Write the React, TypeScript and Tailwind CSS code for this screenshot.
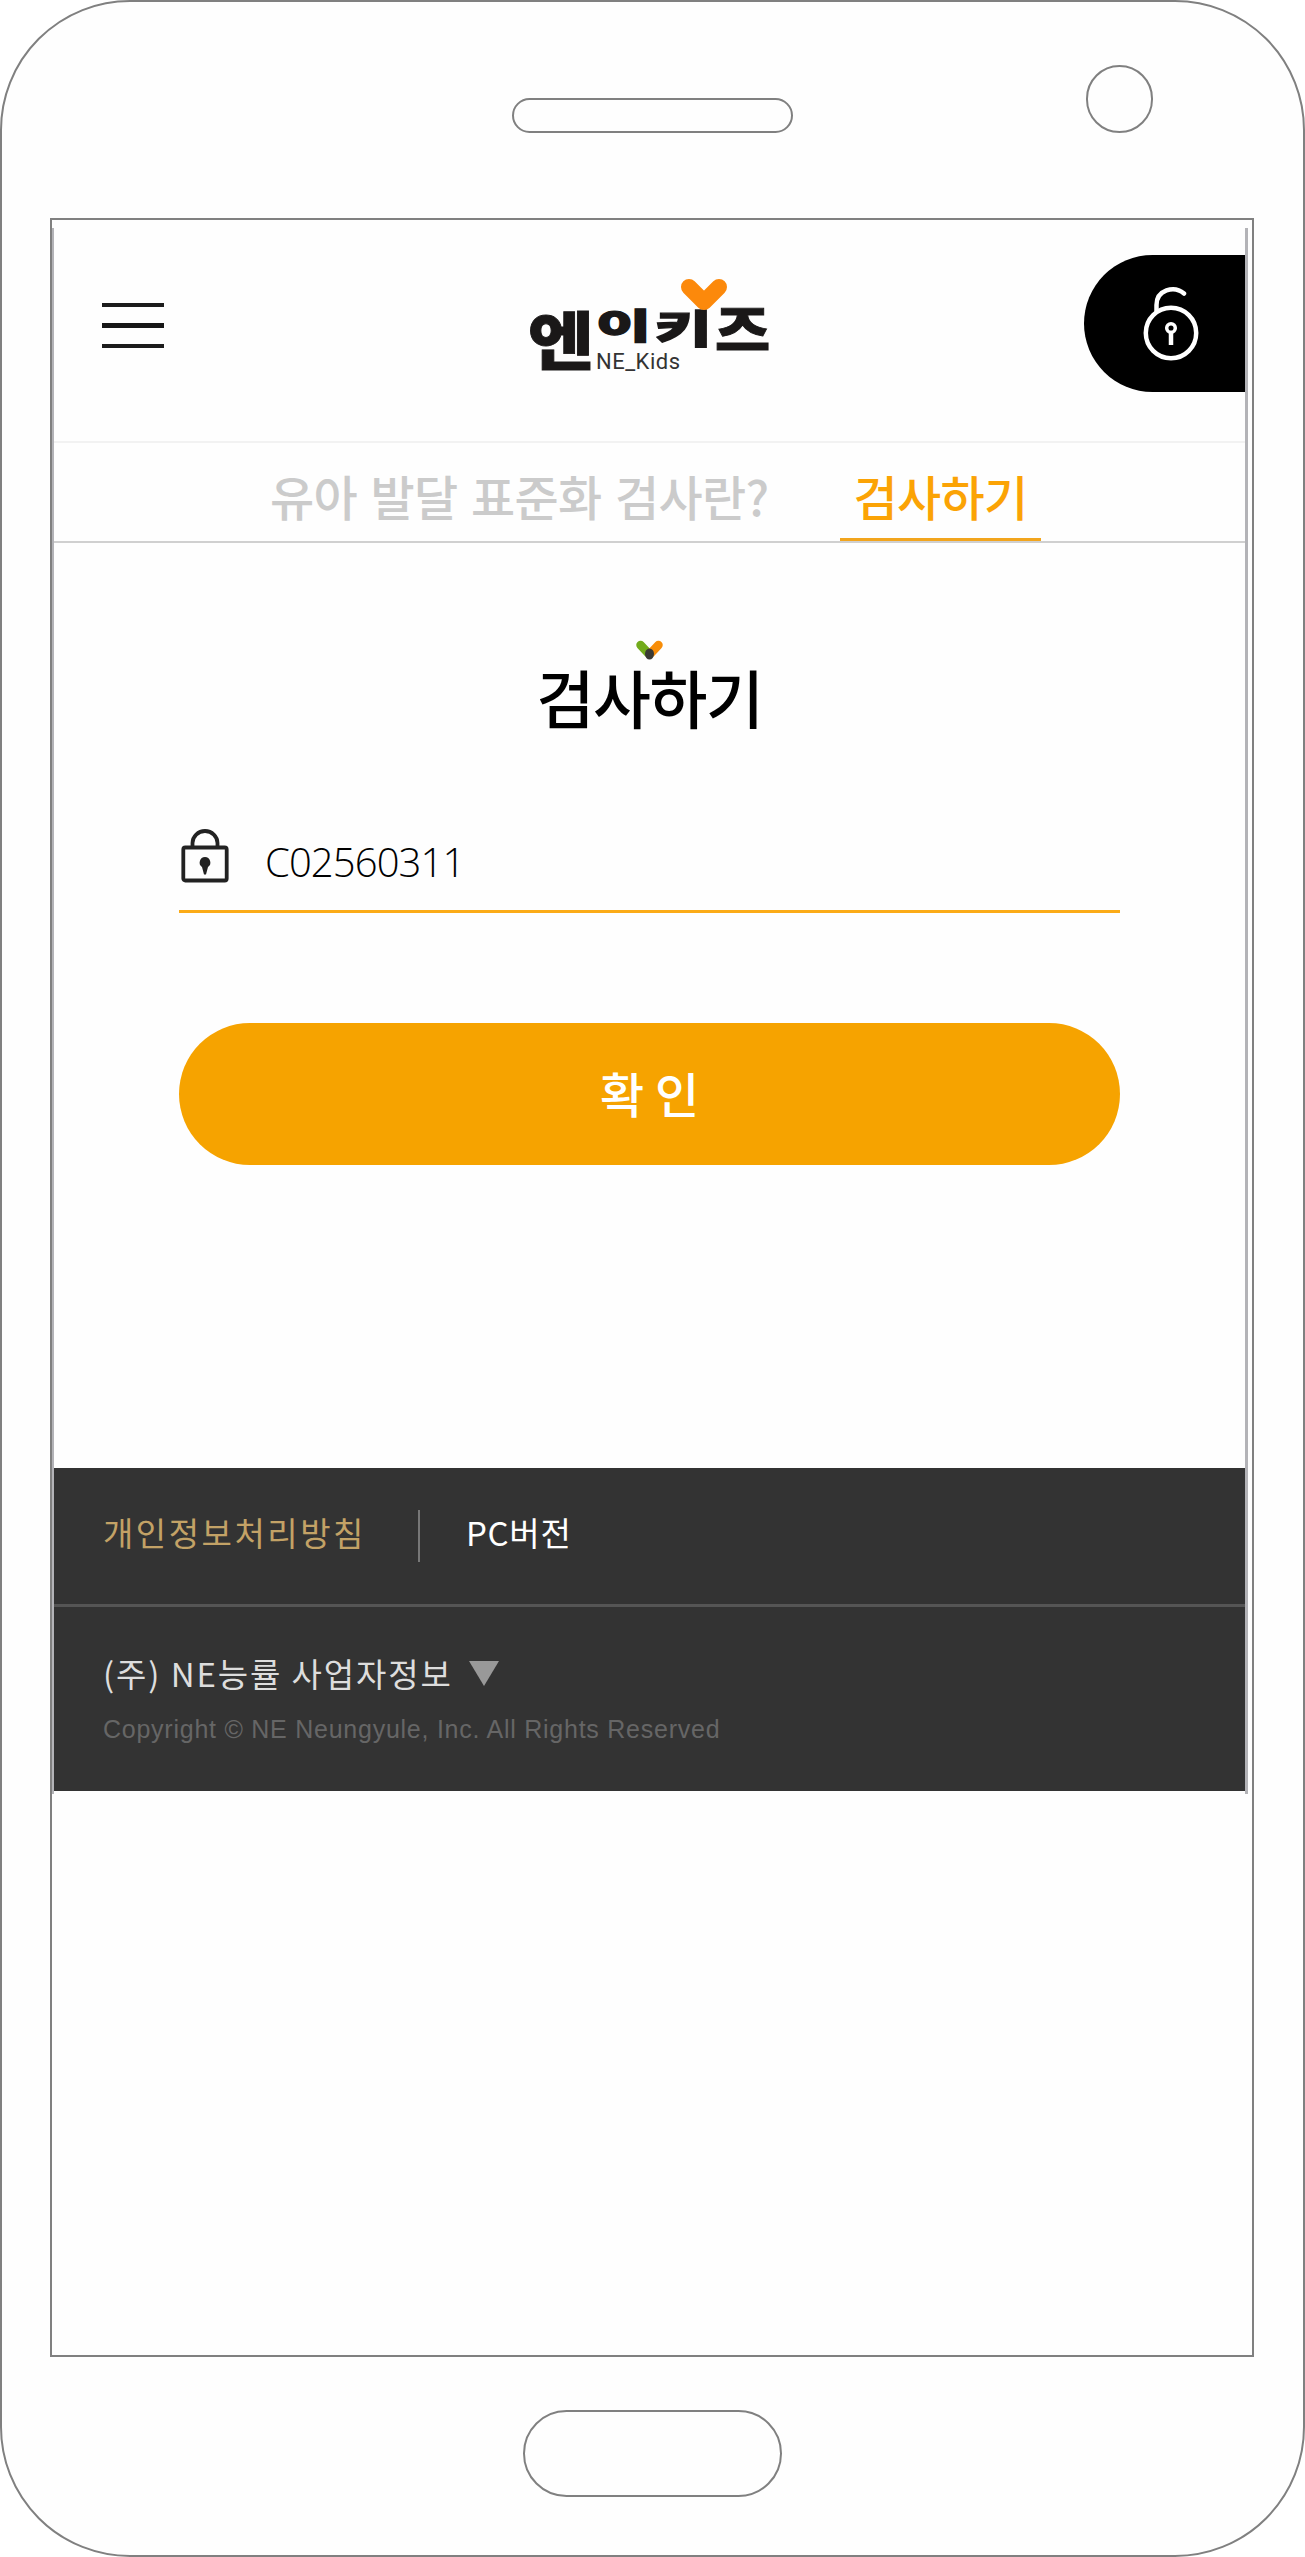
import React from "react";

const KR = "font-['Noto_Sans_CJK_KR',sans-serif]";

function Logo() {
  return (
    <svg className="block h-[100px] w-[250px] overflow-visible" viewBox="525 275 250 100" aria-label="엔이키즈 NE_Kids">
      <g fill="#1a1818" stroke="#1a1818" fontFamily="'Noto Sans CJK KR', sans-serif" fontWeight="900" fontSize="60">
        <text transform="translate(529 364) scale(1.2 1.05)" strokeWidth="0.8">엔</text>
        <text transform="translate(597 339) scale(1 0.58)" strokeWidth="2">이</text>
        <text transform="translate(656 343) scale(1.03 0.64)" strokeWidth="2">키</text>
        <text transform="translate(716 350.5) scale(1 0.9)" strokeWidth="1">즈</text>
      </g>
      <text x="597" y="369" fill="#333" fontFamily="Roboto, sans-serif" fontSize="22" textLength="84" lengthAdjust="spacing">
        NE_Kids
      </text>
      <path d="M690 287 L705 302 L720 287" fill="none" stroke="#fc890b" strokeWidth="16" strokeLinecap="round" strokeLinejoin="round" />
    </svg>
  );
}

function UnlockIcon() {
  return (
    <svg className="block h-[76px] w-[60px]" viewBox="0 0 60 76" fill="none" stroke="#fff" strokeWidth="4.5" strokeLinecap="round">
      <circle cx="30" cy="47" r="25.2" />
      <path d="M15.5 25 V19 C15.5 4 33 -1 43 7.500" />
      <circle cx="30" cy="42" r="4.300" strokeWidth="3.500" />
      <path d="M30 47 V59" strokeLinecap="butt" />
    </svg>
  );
}

function LockIcon() {
  return (
    <svg className="block h-[54px] w-[48px]" viewBox="0 0 48 54" fill="none" stroke="#222" strokeWidth="3.800">
      <rect x="2.300" y="18.500" width="43.400" height="33" rx="2" />
      <path d="M11.500 18 V14 A12.500 12 0 0 1 36.500 14 V18" />
      <path d="M24 28 a5.500 5.500 0 0 1 3 10 L25 45.500 H23 L21 38 A5.500 5.500 0 0 1 24 28Z" fill="#222" stroke="none" />
    </svg>
  );
}

function TitleMark() {
  return (
    <svg className="block h-[20px] w-[27px]" viewBox="0 0 27 20" fill="none" strokeWidth="8.500" strokeLinecap="round">
      <path d="M4.500 5 L12 13" stroke="#72ab1c" />
      <path d="M22.500 5 L15 13" stroke="#f78d08" />
      <ellipse cx="13.500" cy="14" rx="4.500" ry="5.500" fill="#3a3a35" />
    </svg>
  );
}

function Header() {
  return (
    <header className="flex h-[215px] justify-between border-b-2 border-[#f2f2f2]">
      <button className="mt-[75px] ml-[48px] flex h-[45px] w-[62px] flex-col justify-between" aria-label="메뉴">
        <span className="h-[4px] w-full bg-[#1c1c1c]" />
        <span className="h-[5px] w-full bg-[#161616]" />
        <span className="h-[4px] w-full bg-[#1c1c1c]" />
      </button>
      <div className="mt-[47px] ml-[50px]">
        <Logo />
      </div>
      <button className="mt-[27px] flex h-[137px] w-[161px] items-center rounded-l-full bg-black pl-[57px]" aria-label="로그인">
        <UnlockIcon />
      </button>
    </header>
  );
}

function Tabs() {
  return (
    <nav className="flex h-[100px] border-b-2 border-[#d0d0d0] text-[48px] leading-[104px] font-medium tracking-[-0.7px] whitespace-nowrap">
      <a className="ml-[216px] w-[500px] [word-spacing:3.5px] text-[#cbcbcb]">유아 발달 표준화 검사란?</a>
      <a className="ml-[70px] h-[98px] w-[201px] border-b-[3px] border-[#f2a51d] text-center text-[#fba305]">검사하기</a>
    </nav>
  );
}

function CodeForm() {
  return (
    <main className="flex h-[925px] flex-col items-center">
      <div className="mt-[97px]">
        <TitleMark />
      </div>
      <h1 className="h-[80px] text-[63px] leading-[72px] font-medium tracking-[-1.5px] text-black">검사하기</h1>
      <label className="mt-[87px] flex h-[86px] w-[941px] border-b-[3px] border-[#fbab18]">
        <span className="mt-[2px] ml-[2px]">
          <LockIcon />
        </span>
        <span className="mt-[5px] ml-[36px] font-['Open_Sans',sans-serif] text-[40px] leading-[60px] font-light tracking-[-0.9px] text-black">
          C02560311
        </span>
      </label>
      <button className="mt-[110px] h-[142px] w-[941px] rounded-full bg-[#f6a300] pb-[4px] text-[48px] leading-[138px] font-medium text-white">확 인</button>
    </main>
  );
}

function Footer() {
  return (
    <footer className="h-[323px] bg-[#333] font-normal">
      <div className="flex h-[139px] items-center border-b-[3px] border-[#555] pl-[49px] text-[33px] leading-[48px]">
        <a className="mb-[8px] w-[315px] tracking-[2.500px] text-[#c3a266]">개인정보처리방침</a>
        <span className="h-[52px] w-[2px] bg-[#777]" />
        <a className="mb-[8px] ml-[46px] tracking-[0.700px] text-white">PC버전</a>
      </div>
      <div className="pt-[40px] pl-[49px]">
        <div className="flex h-[56px] items-center text-[33px] leading-[56px] text-[#ddd]">
          <span className="mb-[4px] w-[366px] tracking-[1.900px]">(주) NE능률 사업자정보</span>
          <svg className="mb-[4px] block h-[25px] w-[30px]" viewBox="0 0 30 25">
            <path d="M0 0 H30 L15 25Z" fill="#999" />
          </svg>
        </div>
        <p className="mt-[3px] font-['Liberation_Sans',sans-serif] text-[25px] leading-[46px] tracking-[0.750px] text-[#666]">
          Copyright © NE Neungyule, Inc. All Rights Reserved
        </p>
      </div>
    </footer>
  );
}

export default function App() {
  return (
    <div className={`flex h-[2557px] w-[1305px] flex-col rounded-[130px] border-2 border-[#808080] bg-[#fefefe] ${KR}`}>
      <div className="flex h-[216px] pt-[63px] pl-[510px]">
        <div className="mt-[33px] h-[35px] w-[281px] rounded-full border-2 border-[#808080]" />
        <div className="ml-[293px] h-[68px] w-[67px] rounded-full border-2 border-[#808080]" />
      </div>
      <div className="ml-[48px] h-[2139px] w-[1204px] border-2 border-[#808080] pt-[8px]">
        <div className="h-[1566px] w-[1196px] border-r-[3px] border-l-2 border-[#b3b3b7]">
          <Header />
          <Tabs />
          <CodeForm />
          <Footer />
        </div>
      </div>
      <div className="mt-[53px] ml-[521px] h-[87px] w-[259px] rounded-full border-2 border-[#808080]" />
    </div>
  );
}
